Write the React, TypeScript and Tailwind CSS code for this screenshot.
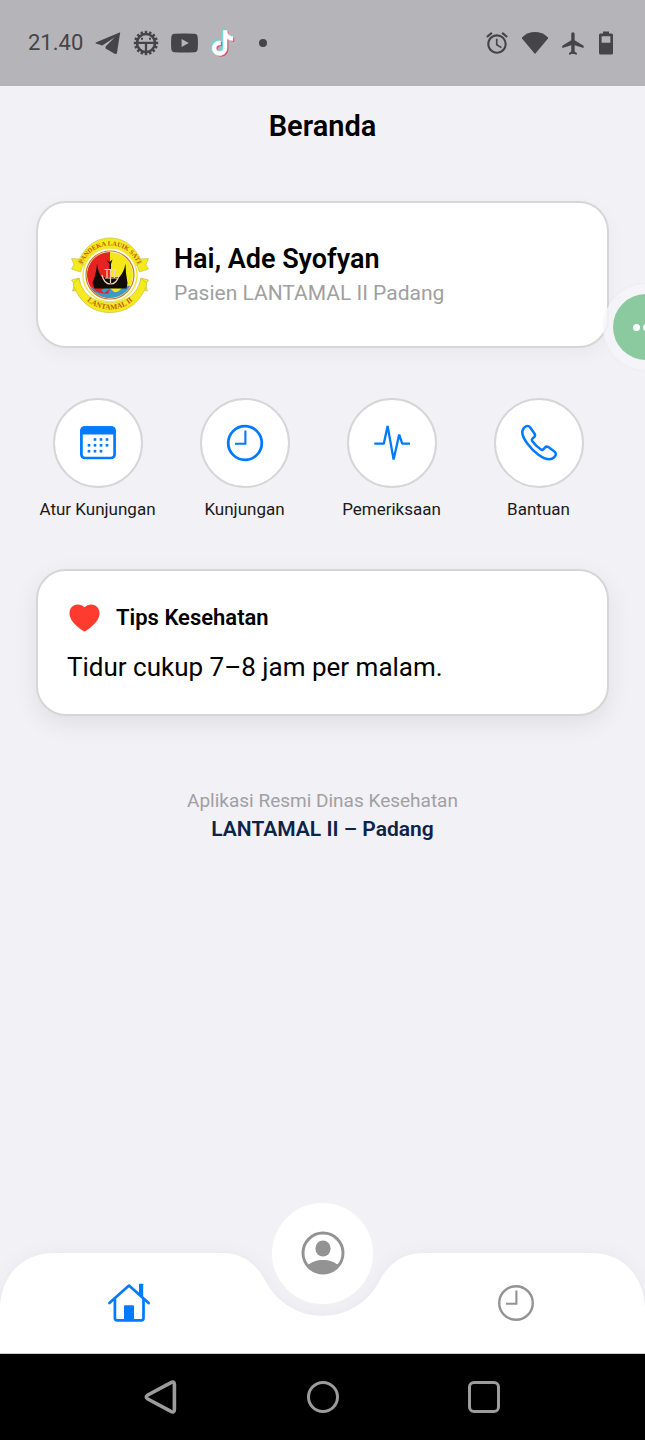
import React from "react";
import { MdAlarm, MdFlight } from "react-icons/md";

type IconProps = { className?: string };

function TelegramIcon() {
  return (
    <svg className="h-6 w-[26px]" viewBox="0 0 26 24" fill="currentColor" aria-hidden="true">
      <path d="M25.2 1.2 L.8 11.6 Q0 12.2.9 12.6 L7.3 14.6 L19.8 6.2 L10.6 15.6 L10.5 17.6 L20.2 23 Q21.6 23.4 22 21.8 Z" />
    </svg>
  );
}

function GearIcon() {
  const teeth = Array.from({ length: 16 }, (_, i) => i * 22.5);
  return (
    <svg className="size-[26px]" viewBox="0 0 26 26" fill="none" stroke="currentColor" aria-hidden="true">
      <circle cx="13" cy="13" r="9" strokeWidth="2.600" />
      {teeth.map((a) => (
        <path key={a} d="M13 .8V4" strokeWidth="2.500" transform={`rotate(${a} 13 13)`} />
      ))}
      <path d="M4 12.8H22M13 12.8V22" strokeWidth="2.300" />
      <path d="M9 7.800v2M17 7.800v2" strokeWidth="2" />
    </svg>
  );
}

function VideoIcon() {
  return (
    <svg className="h-5 w-[27px]" viewBox="0 0 27 20" fill="currentColor" aria-hidden="true">
      <path
        fillRule="evenodd"
        d="M3.5 .8Q13.500 0 23.500 .8Q26.500 1 26.700 4Q27.200 10 26.700 16Q26.500 19 23.500 19.200Q13.500 20 3.500 19.200Q.5 19 .3 16Q-.2 10 .3 4Q.5 1 3.500 .8ZM10.600 6V14L17.800 10Z"
      />
    </svg>
  );
}

const NOTE =
  "M12.600 1H16.200C16.600 4.600 18.800 6.900 22.200 7.200V11.200C20 11.200 18 10.500 16.400 9.300V18.200C16.400 23 13 26 9 26C4.800 26 1.500 22.800 1.500 18.700C1.500 14.200 5.200 11 9.900 11.500V15.600C7.500 15 5.500 16.500 5.500 18.700C5.500 20.600 7 22 9 22C11 22 12.600 20.500 12.600 18.300Z";

function NoteIcon() {
  return (
    <svg className="h-7 w-[25px]" viewBox="0 0 25 28" aria-hidden="true">
      <path d={NOTE} fill="#5fd9dc" transform="translate(-.6 -.5)" />
      <path d={NOTE} fill="#e0405f" transform="translate(2 1.500)" />
      <path d={NOTE} fill="#fff" stroke="#fff" strokeWidth=".5" transform="translate(.7 .5)" />
    </svg>
  );
}

function WifiIcon() {
  return (
    <svg className="h-6 w-[26px]" viewBox="0 0 26 24" fill="currentColor" aria-hidden="true">
      <path d="M-.5 7C7-.9 19-.9 26.500 7L13 23Z" />
    </svg>
  );
}

function BatteryIcon() {
  return (
    <svg className="h-6 w-[14px]" viewBox="0 0 14 24" fill="currentColor" aria-hidden="true">
      <path
        fillRule="evenodd"
        d="M4 .5H10V2.500H12.500Q14 2.500 14 4V22Q14 23.500 12.500 23.500H1.500Q0 23.500 0 22V4Q0 2.500 1.500 2.500H4ZM2.600 5.200V11.800H11.400V5.200Z"
      />
    </svg>
  );
}

function CalendarIcon({ className }: IconProps) {
  const dots = [
    [19, 18.5], [25, 18.5], [31, 18.5],
    [13, 24.3], [19, 24.3], [25, 24.3], [31, 24.3],
    [13, 30.2], [19, 30.2], [25, 30.2],
  ];
  return (
    <svg className={className} viewBox="0 0 44 44" aria-hidden="true">
      <rect x="5.400" y="6.600" width="33.200" height="30.400" rx="3.500" fill="none" stroke="currentColor" strokeWidth="2.700" />
      <path d="M4.500 13.500V9Q4.500 5.300 8.500 5.300H35.500Q39.500 5.300 39.500 9V13.500Z" fill="currentColor" />
      {dots.map(([x, y]) => (
        <rect key={`${x}-${y}`} x={x - 1.3} y={y - 1.3} width="2.600" height="2.600" fill="currentColor" />
      ))}
    </svg>
  );
}

function ClockIcon({ className, thin }: IconProps & { thin?: boolean }) {
  return (
    <svg className={className} viewBox="0 0 44 44" fill="none" stroke="currentColor" aria-hidden="true">
      <circle cx="22" cy="22" r="16.800" strokeWidth={thin ? 2.4 : 2.8} />
      <path d="M12 22.700H22.400V9.400" strokeWidth="2.100" />
    </svg>
  );
}

function PulseIcon({ className }: IconProps) {
  return (
    <svg className={className} viewBox="0 0 44 44" fill="none" stroke="currentColor" strokeWidth="2.300" strokeLinejoin="bevel" aria-hidden="true">
      <path d="M4.300 22.700H13.800L17.600 5L23.600 38.500L29.200 13.500L32.200 22.700H40" />
    </svg>
  );
}

function PhoneIcon({ className }: IconProps) {
  return (
    <svg className={className} viewBox="0 0 44 44" fill="none" stroke="currentColor" strokeWidth="2.500" strokeLinejoin="round" aria-hidden="true">
      <path d="M7.200 6.600C9.500 4.500 11.900 4.600 13.400 6.800L17.600 12.700C18.500 14.100 18.200 15 17.200 16L15.400 17.600C14.600 18.400 14.600 19.100 15.200 20C17.600 23.400 20.400 26.100 23.900 28.500C24.800 29.100 25.500 29.100 26.300 28.300L28 26.500C29 25.500 30 25.200 31.400 26.100L37.100 30.200C39.400 31.800 39.400 34 37.300 36.100C33.400 40 27.200 37.800 21.800 33.900C17.500 30.800 13.300 26.600 10.100 22.200C6.200 16.800 3.300 10.400 7.200 6.600Z" />
    </svg>
  );
}

function HouseIcon({ className }: IconProps) {
  return (
    <svg className={className} viewBox="0 0 44 44" fill="none" stroke="currentColor" strokeWidth="2.700" strokeLinejoin="round" strokeLinecap="round" aria-hidden="true">
      <path d="M2.400 22L22 4.600L41.600 22" />
      <path d="M7.900 18.500V37Q7.900 39.400 10.300 39.400H34.200Q36.500 39.400 36.500 37V18.500" />
      <path d="M32 14V3.300Q32 2.700 32.600 2.700H35.600Q36.200 2.700 36.200 3.300V17.500Z" fill="currentColor" stroke="none" />
      <path d="M17 39.400V25.200Q17 24.300 18 24.300H26Q27 24.300 27 25.200V39.400Z" fill="currentColor" stroke="none" />
    </svg>
  );
}

function PersonIcon({ className }: IconProps) {
  return (
    <svg className={className} viewBox="0 0 44 44" aria-hidden="true">
      <circle cx="22" cy="22" r="20" fill="none" stroke="currentColor" strokeWidth="2.900" />
      <ellipse cx="22" cy="17.500" rx="7.600" ry="8" fill="currentColor" />
      <path d="M6.500 34.500C10 31 16 29 22 29S34 31 37.500 34.500A20.500 20.500 0 0 1 6.500 34.500Z" fill="currentColor" />
    </svg>
  );
}

function HeartIcon({ className }: IconProps) {
  return (
    <svg className={className} viewBox="0 0 30 28" fill="currentColor" aria-hidden="true">
      <path d="M15 27.500C14.500 27.500 14 27.200 13.500 26.800C5 21 0 15.500 0 9C0 4 3.500 .4 8 .4C11 .4 13.500 1.500 15 3.200C16.500 1.500 19 .4 22 .4C26.500 .4 30 4 30 9C30 15.500 25 21 16.500 26.800C16 27.200 15.500 27.500 15 27.500Z" />
    </svg>
  );
}

function Emblem() {
  return (
    <svg className="h-20 w-20 shrink-0" viewBox="0 0 80 80" role="img" aria-label="Lambang Lantamal II">
      <defs>
        <path id="arcTop" d="M10.500 40A29.500 29.500 0 0 1 69.500 40" />
        <path id="arcBottom" d="M5.500 40A34.500 34.500 0 0 0 74.500 40" />
        <clipPath id="disc">
          <circle cx="40" cy="40" r="23" />
        </clipPath>
      </defs>
      <g fill="#f4ea1c" stroke="#b9b94a" strokeWidth=".6" strokeLinejoin="round">
        <path d="M9 24L1.500 23.500L4 29.500L1.500 34L10.500 37L14 27Z" />
        <path d="M71 24L78.500 23.500L76 29.500L78.500 34L69.500 37L66 27Z" />
        <path d="M9 43L1.500 45L4.500 49.500L2.500 56L11 55Z" />
        <path d="M71 43L78.500 45L75.500 49.500L77.500 56L69 55Z" />
        <path d="M8 27C16 9 28 3 40 3S64 9 72 27L63.500 32C58 18 50 13 40 13S22 18 16.500 32Z" />
        <path d="M9 43C12 60 25 67.500 40 67.500S68 60 71 43L77 49C70 69 56 77.500 40 77.500S10 69 3 49Z" />
      </g>
      <circle cx="40" cy="40" r="27" fill="#fff" stroke="#f1e640" strokeWidth="1.400" />
      <g clipPath="url(#disc)">
        <path d="M16 16H40V64H16Z" fill="#e62320" />
        <path d="M40 16H64V64H40Z" fill="#f6e71a" />
        <path d="M15 54Q20 50 24 54T33 54T42 55T51 54T65 53V66H15Z" fill="#3a9bcb" />
        <path d="M18 53L24 57L29 53L34 58L40 54L38 59L30 58Z" fill="#e62320" />
      </g>
      <circle cx="40" cy="40" r="24" fill="none" stroke="#c77b2a" strokeWidth="1.200" />
      <path d="M27 28.500Q28 37 31.500 42H49.500Q54 37 55.500 28.500Q55.500 38 57.500 48L56.500 53.500H24.500L22.500 48Q26.500 38 27 28.500Z" fill="#120b08" />
      <path d="M36.500 25L39.500 27L42.500 24.500L41 29V34H39.500V29Z" fill="#120b08" />
      <path d="M32 40Q34 49 40.500 49T49 40M40.500 34V48M34.500 34.500H46.500M37 34.500V43M44.500 34.500V43M35 43H47" fill="none" stroke="#f0d9b0" strokeWidth="1.200" />
      <g fontFamily="'Liberation Serif', serif" fontWeight="700" fill="#c2571a">
        <text fontSize="6.500" textAnchor="middle">
          <textPath href="#arcTop" startOffset="50%">PANDEKA LAUIK SATI</textPath>
        </text>
        <text fontSize="7.500" textAnchor="middle">
          <textPath href="#arcBottom" startOffset="50%">LANTAMAL II</textPath>
        </text>
      </g>
    </svg>
  );
}

const actions = [
  { label: "Atur Kunjungan", Icon: CalendarIcon },
  { label: "Kunjungan", Icon: ClockIcon },
  { label: "Pemeriksaan", Icon: PulseIcon },
  { label: "Bantuan", Icon: PhoneIcon },
];

function StatusBar() {
  return (
    <div className="flex h-[86px] items-center justify-between bg-[#b5b4b9] pr-8 pl-7 text-[#454449]">
      <div className="flex items-center gap-3">
        <span className="text-[22px] leading-7">21.40</span>
        <TelegramIcon />
        <GearIcon />
        <VideoIcon />
        <NoteIcon />
        <span className="ml-3 size-2 rounded-full bg-[#454449]" />
      </div>
      <div className="flex items-center gap-3">
        <MdAlarm className="size-[26px]" />
        <WifiIcon />
        <MdFlight className="size-[27px]" />
        <BatteryIcon />
      </div>
    </div>
  );
}

function TabBar() {
  return (
    <nav aria-label="Menu utama" className="relative h-[100px]">
      <svg
        className="absolute inset-0 h-full w-full overflow-visible drop-shadow-[0_0_8px_rgba(60,60,90,0.05)]"
        viewBox="0 0 645 100"
        preserveAspectRatio="none"
        aria-hidden="true"
      >
        <path
          d="M0 100V54C2 20 24 0 54 0H222C244 0 257 12 266 29A64 64 0 0 0 379 29C388 12 401 0 423 0H591C621 0 643 20 645 54V100Z"
          fill="#fff"
        />
      </svg>
      <div className="relative flex h-full items-center">
        <button type="button" aria-label="Beranda" className="flex w-2/5 justify-center text-[#007aff]">
          <HouseIcon className="size-11" />
        </button>
        <div className="flex w-1/5 justify-center">
          <button
            type="button"
            aria-label="Profil"
            className="mb-[100px] flex size-[101px] shrink-0 items-center justify-center rounded-full bg-white text-[#939393]"
          >
            <PersonIcon className="size-11" />
          </button>
        </div>
        <button type="button" aria-label="Riwayat" className="flex w-2/5 justify-center text-[#939393]">
          <ClockIcon className="size-11" thin />
        </button>
      </div>
    </nav>
  );
}

function SystemNav() {
  return (
    <div className="flex h-[87px] items-center justify-center border-t border-[#d0d0d0] bg-black text-[#9c9c9c]">
      <button type="button" aria-label="Kembali" className="flex w-1/4 justify-center">
        <svg className="size-9" viewBox="0 0 36 36" fill="none" stroke="currentColor" strokeWidth="3.600" aria-hidden="true">
          <path d="M27.500 3.800Q31.400 1.500 31.400 5.500V30.500Q31.400 34.500 27.500 32.200L4.800 20Q1.700 18 4.800 16Z" strokeLinejoin="round" />
        </svg>
      </button>
      <button type="button" aria-label="Layar utama" className="flex w-1/4 justify-center">
        <span className="size-8 rounded-full border-3 border-[#9c9c9c]" />
      </button>
      <button type="button" aria-label="Aplikasi terbaru" className="flex w-1/4 justify-center">
        <span className="size-8 rounded-md border-3 border-[#9c9c9c]" />
      </button>
    </div>
  );
}

export default function App() {
  return (
    <div className="relative flex min-h-screen flex-col overflow-hidden bg-[#f2f1f6] font-[Roboto,sans-serif] text-black">
      <StatusBar />
      <header className="flex h-20 items-center justify-center">
        <h1 className="text-[29px] leading-9 font-semibold">Beranda</h1>
      </header>

      <main className="flex-1">
        <section className="mx-9 mt-[35px] flex min-h-[147px] items-center gap-6 rounded-[30px] border-2 border-[#d6d6d8] bg-white px-8 shadow-[0_6px_20px_rgba(0,0,0,0.04)]">
          <Emblem />
          <div>
            <h2 className="text-[27px] leading-9 font-semibold">Hai, Ade Syofyan</h2>
            <p className="text-[21px] leading-8 text-[#a0a0a0]">Pasien LANTAMAL II Padang</p>
          </div>
        </section>

        <div className="mt-[50px] grid grid-cols-4 pr-[33px] pl-6">
          {actions.map(({ label, Icon }) => (
            <button key={label} type="button" className="flex flex-col items-center gap-[10px]">
              <span className="flex size-[90px] items-center justify-center rounded-full border-2 border-[#d6d6d8] bg-white text-[#007aff]">
                <Icon className="size-11" />
              </span>
              <span className="text-[17px] leading-[22px] whitespace-nowrap text-[#1a1a1c]">{label}</span>
            </button>
          ))}
        </div>

        <section className="mx-9 mt-[49px] flex min-h-[147px] flex-col justify-center gap-3 rounded-[30px] border-2 border-[#d6d6d8] bg-white px-[29px] pt-1 shadow-[0_8px_24px_rgba(0,0,0,0.08)]">
          <div className="flex items-center gap-4 pl-[2px]">
            <HeartIcon className="h-7 w-[31px] text-[#ff3b30]" />
            <h2 className="text-[22px] leading-8 font-semibold">Tips Kesehatan</h2>
          </div>
          <p className="text-[26px] leading-[42px]">Tidur cukup 7–8 jam per malam.</p>
        </section>

        <footer className="mt-[71px] text-center leading-7">
          <p className="text-[19px] leading-7 text-[#a0a0a4]">Aplikasi Resmi Dinas Kesehatan</p>
          <p className="text-[21px] leading-7 font-semibold text-[#0d2347]">LANTAMAL II – Padang</p>
        </footer>
      </main>

      <TabBar />
      <SystemNav />

      <button
        type="button"
        aria-label="Opsi lainnya"
        className="absolute top-[284px] -right-11 flex size-[86px] items-center justify-center rounded-full bg-[#f5f5f9]/80 shadow-[0_0_4px_rgba(0,0,0,0.03)]"
      >
        <span className="flex size-[66px] items-center justify-center gap-[3px] rounded-full bg-[#8bc99e]">
          <span className="size-[7px] rounded-full bg-white" />
          <span className="size-[7px] rounded-full bg-white" />
          <span className="size-[7px] rounded-full bg-white" />
        </span>
      </button>
    </div>
  );
}
